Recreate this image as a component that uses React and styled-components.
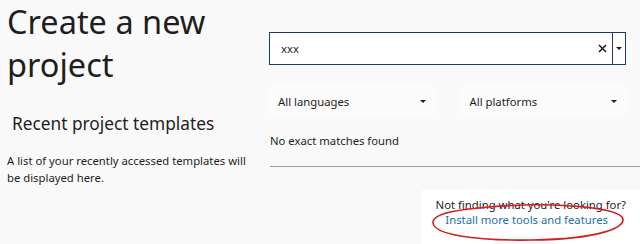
import React from "react";
import styled, { createGlobalStyle } from "styled-components";

const GlobalStyle = createGlobalStyle`
  html, body {
    margin: 0;
    padding: 0;
    background: #f9f9f9;
    font-family: "Noto Sans", "Open Sans", sans-serif;
    color: #1e1e1e;
  }
`;

const Page = styled.div`
  display: grid;
  grid-template-columns: 269px 1fr;
  width: 640px;
  height: 244px;
  overflow: hidden;
`;

const LeftColumn = styled.div`
  display: flex;
  flex-direction: column;
  padding-left: 7px;
`;

const Title = styled.h1`
  margin: 0;
  font-size: 32.5px;
  font-weight: 400;
  line-height: 43px;
  color: #1e1e1e;
`;

const SectionTitle = styled.h2`
  margin: 27px 0 0 5px;
  font-size: 17.3px;
  font-weight: 400;
  line-height: 22px;
  color: #1e1e1e;
`;

const Hint = styled.p`
  margin: 17px 0 0 0;
  font-size: 11.3px;
  line-height: 17px;
  color: #1e1e1e;
`;

const RightColumn = styled.div`
  display: flex;
  flex-direction: column;
  padding-top: 32px;
`;

const SearchBox = styled.div`
  display: flex;
  align-items: stretch;
  height: 31px;
  margin-right: 14px;
  border: 1px solid #1e3a5c;
  background: #ffffff;
`;

const SearchText = styled.span`
  flex: 1;
  display: flex;
  align-items: center;
  padding-left: 11px;
  font-size: 11.3px;
  color: #1e1e1e;
`;

const ClearButton = styled.span`
  display: flex;
  align-items: center;
  padding: 0 5px;
`;

const SearchDrop = styled.span`
  display: flex;
  align-items: center;
  justify-content: center;
  width: 12px;
  border-left: 1px solid #1e3a5c;
`;

const FilterRow = styled.div`
  display: flex;
  gap: 26px;
  margin: 20px 14px 0 0;
`;

const Select = styled.div`
  flex: 1;
  display: flex;
  align-items: center;
  justify-content: space-between;
  height: 32px;
  padding: 0 9px 0 9px;
  background: #fbfbfb;
  font-size: 11.3px;
  color: #1e1e1e;
`;

const Arrow = styled.span`
  width: 0;
  height: 0;
  border-left: ${(p) => p.$size}px solid transparent;
  border-right: ${(p) => p.$size}px solid transparent;
  border-top: ${(p) => p.$size}px solid #1e1e1e;
`;

const Message = styled.div`
  margin: 15px 0 0 1px;
  font-size: 11.3px;
  line-height: 17px;
  color: #1e1e1e;
`;

const Divider = styled.div`
  height: 1px;
  margin: 17px 0 0 1px;
  background: #9a9a9a;
`;

const Footer = styled.div`
  position: relative;
  align-self: flex-end;
  width: 204px;
  height: 58px;
  margin-top: 23px;
  padding: 7px 14px 0 0;
  background: #ffffff;
  text-align: right;
  font-size: 11.3px;
  line-height: 15px;
`;

const FooterText = styled.div`
  color: #1e1e1e;
`;

const Link = styled.a`
  display: block;
  padding-right: 18px;
  color: #1e6fa8;
  text-decoration: none;
`;

const Annotation = styled.svg`
  position: absolute;
  left: 10px;
  top: 13px;
  pointer-events: none;
`;

function CloseIcon() {
  return (
    <svg width="9" height="9" viewBox="0 0 9 9">
      <path d="M1 1L8 8M8 1L1 8" stroke="#1e1e1e" strokeWidth="1.6" />
    </svg>
  );
}

export default function App() {
  return (
    <>
      <GlobalStyle />
      <Page>
        <LeftColumn>
          <Title>
            Create a new
            <br />
            project
          </Title>
          <SectionTitle>Recent project templates</SectionTitle>
          <Hint>
            A list of your recently accessed templates will
            <br />
            be displayed here.
          </Hint>
        </LeftColumn>

        <RightColumn>
          <SearchBox>
            <SearchText>xxx</SearchText>
            <ClearButton>
              <CloseIcon />
            </ClearButton>
            <SearchDrop>
              <Arrow $size={3} />
            </SearchDrop>
          </SearchBox>

          <FilterRow>
            <Select>
              All languages
              <Arrow $size={3} />
            </Select>
            <Select>
              All platforms
              <Arrow $size={3} />
            </Select>
          </FilterRow>

          <Message>No exact matches found</Message>
          <Divider />

          <Footer>
            <FooterText>Not finding what you're looking for?</FooterText>
            <Link href="#">Install more tools and features</Link>
            <Annotation width="196" height="40" viewBox="0 0 196 40">
              <path
                d="M56 4 C110 -1 180 3 190 14 C197 24 168 36 100 37 C40 38 2 31 1 20 C0 11 22 6 72 3"
                fill="none"
                stroke="#d0201c"
                strokeWidth="1.6"
              />
            </Annotation>
          </Footer>
        </RightColumn>
      </Page>
    </>
  );
}
